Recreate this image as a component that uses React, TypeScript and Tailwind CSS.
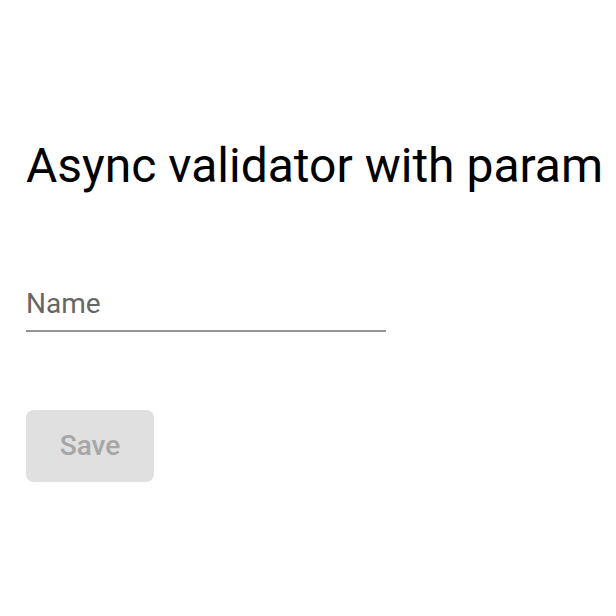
export default function App() {
  return (
    <div className="min-h-[616px] w-[616px] bg-white pl-[26px] pt-[134px]" style={{ fontFamily: "Roboto, 'Liberation Sans', sans-serif" }}>
      <h1 className="text-[48px] leading-[64px] font-normal text-black whitespace-nowrap">Async validator with param</h1>
      <div className="mt-[88px] w-[360px] border-b-2 border-[#949494] pb-[8px]">
        <div className="text-[28px] leading-[36px] text-[#666666]">Name</div>
      </div>
      <button className="mt-[78px] w-[128px] h-[72px] rounded-[8px] bg-[#e0e0e0] text-[28px] font-medium text-[#a6a6a6]">Save</button>
    </div>
  );
}
